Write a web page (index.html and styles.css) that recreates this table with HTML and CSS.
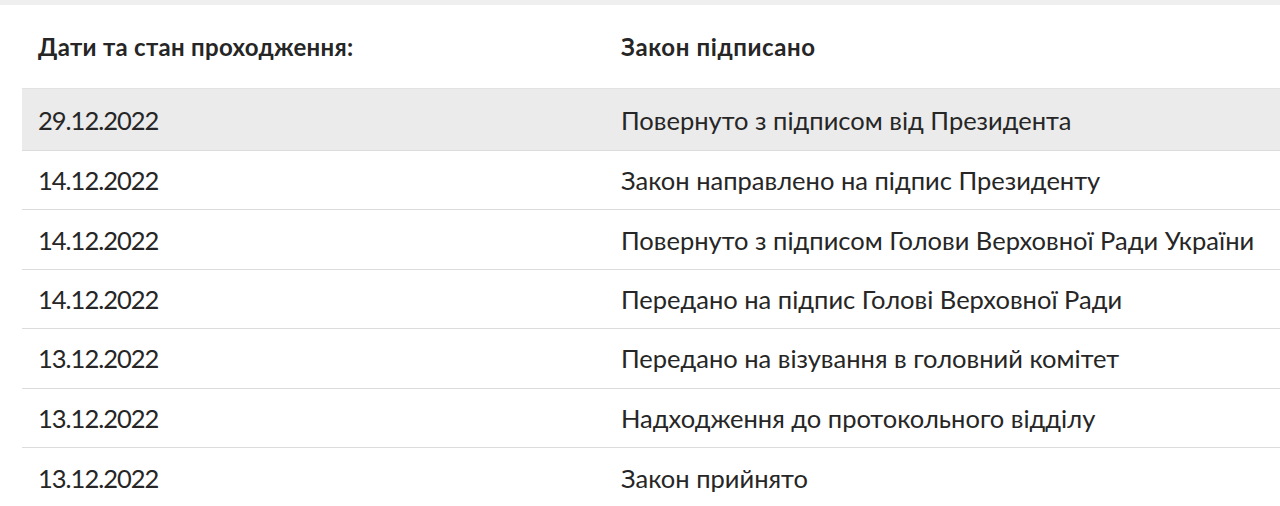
FILE: index.html
```html
<!DOCTYPE html>
<html lang="uk">
<head>
<meta charset="utf-8">
<link rel="stylesheet" href="styles.css">
</head>
<body>
<div class="topbar"></div>
<div class="wrap">
  <div class="head">
    <div class="c1">Дати та стан проходження:</div>
    <div class="c2">Закон підписано</div>
  </div>
  <div class="row active"><div class="c1">29.12.2022</div><div class="c2">Повернуто з підписом від Президента</div></div>
  <div class="row"><div class="c1">14.12.2022</div><div class="c2">Закон направлено на підпис Президенту</div></div>
  <div class="row"><div class="c1">14.12.2022</div><div class="c2">Повернуто з підписом Голови Верховної Ради України</div></div>
  <div class="row"><div class="c1">14.12.2022</div><div class="c2">Передано на підпис Голові Верховної Ради</div></div>
  <div class="row"><div class="c1">13.12.2022</div><div class="c2">Передано на візування в головний комітет</div></div>
  <div class="row"><div class="c1">13.12.2022</div><div class="c2">Надходження до протокольного відділу</div></div>
  <div class="row last"><div class="c1">13.12.2022</div><div class="c2">Закон прийнято</div></div>
</div>
</body>
</html>
```
FILE: styles.css
```css
html, body { margin: 0; padding: 0; background: #fff; }
body { font-family: Lato, "Noto Sans", sans-serif; color: #262626; overflow: hidden; }
.topbar { height: 5px; background: #efefef; }
.wrap { margin-left: 22px; }
.head { display: grid; grid-template-columns: 583px 1fr; height: 83px; align-items: center; font-weight: 700; font-size: 24px; letter-spacing: 0.3px; }
.head .c1, .head .c2 { padding-left: 16px; }
.head .c2 { letter-spacing: 0.6px; }
.row { box-sizing: border-box; display: grid; grid-template-columns: 583px 1fr; height: 59.4px; align-items: center; border-bottom: 1px solid #dcdcdc; font-size: 25.5px; }
.row .c1, .row .c2 { padding-left: 16px; }
.row .c1 { letter-spacing: -1px; }
.row.active { background: #ebebeb; height: 63px; border-top: 1px solid #e2e2e2; padding-top: 1px; }
.row.last { border-bottom: none; }
```
